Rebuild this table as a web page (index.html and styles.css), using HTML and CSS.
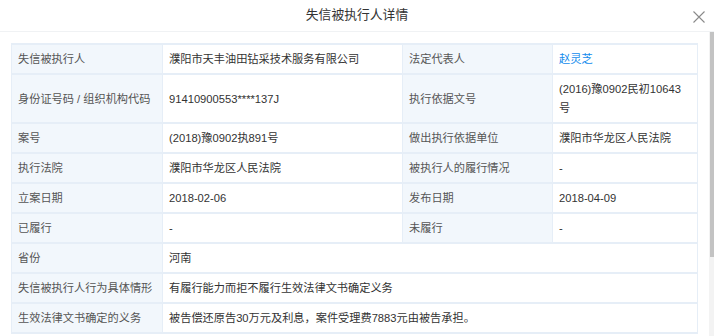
FILE: index.html
```html
<!DOCTYPE html>
<html lang="zh">
<head>
<meta charset="utf-8">
<title>失信被执行人详情</title>
<link rel="stylesheet" href="styles.css">
</head>
<body>
<div class="dialog">
  <div class="header">
    <h1 class="title">失信被执行人详情</h1>
    <button class="close" aria-label="关闭">
      <svg width="12" height="12" viewBox="0 0 12 12"><path d="M0.5 0.5L11.5 11.5M11.5 0.5L0.5 11.5" stroke="#8a8a8a" stroke-width="1.1" fill="none"/></svg>
    </button>
  </div>
  <div class="main">
    <div class="body">
      <table class="detail">
        <colgroup>
          <col class="c-label1"><col class="c-val1"><col class="c-label2"><col class="c-val2">
        </colgroup>
        <tr><td class="lbl">失信被执行人</td><td>濮阳市天丰油田钻采技术服务有限公司</td><td class="lbl">法定代表人</td><td><a class="link" href="#">赵灵芝</a></td></tr>
        <tr><td class="lbl">身份证号码 / 组织机构代码</td><td>91410900553****137J</td><td class="lbl">执行依据文号</td><td>(2016)豫0902民初10643号</td></tr>
        <tr><td class="lbl">案号</td><td>(2018)豫0902执891号</td><td class="lbl">做出执行依据单位</td><td>濮阳市华龙区人民法院</td></tr>
        <tr><td class="lbl">执行法院</td><td>濮阳市华龙区人民法院</td><td class="lbl">被执行人的履行情况</td><td>-</td></tr>
        <tr><td class="lbl">立案日期</td><td>2018-02-06</td><td class="lbl">发布日期</td><td>2018-04-09</td></tr>
        <tr><td class="lbl">已履行</td><td>-</td><td class="lbl">未履行</td><td>-</td></tr>
        <tr><td class="lbl">省份</td><td colspan="3">河南</td></tr>
        <tr><td class="lbl">失信被执行人行为具体情形</td><td colspan="3">有履行能力而拒不履行生效法律文书确定义务</td></tr>
        <tr><td class="lbl">生效法律文书确定的义务</td><td colspan="3">被告偿还原告30万元及利息，案件受理费7883元由被告承担。</td></tr>
      </table>
    </div>
    <div class="scrollbar"><div class="thumb"></div></div>
  </div>
</div>
</body>
</html>
```
FILE: styles.css
```css
* { box-sizing: border-box; }
html, body { margin: 0; padding: 0; background: #fff; }
body {
  font-family: "Liberation Sans", "Noto Sans CJK SC", sans-serif;
  font-size: 11.2px;
  color: #333;
  width: 714px;
  height: 336px;
  overflow: hidden;
}
.dialog { display: flex; flex-direction: column; height: 336px; }
.header {
  position: relative;
  height: 32px;
  flex: none;
  display: flex;
  align-items: center;
  justify-content: center;
  border-bottom: 1px solid #f0f2f4;
}
.title {
  margin: 0;
  font-size: 12.8px;
  font-weight: normal;
  color: #333;
  line-height: 18px;
  padding-bottom: 1px;
}
.close {
  position: absolute;
  right: 9px;
  top: 11px;
  border: 0;
  background: none;
  padding: 0;
  width: 12px;
  height: 12px;
  display: block;
}
.close svg { display: block; }
.main {
  flex: 1;
  display: flex;
  min-height: 0;
}
.body {
  flex: 1;
  overflow: hidden;
  padding: 11px 12px 0 11px;
}
.scrollbar {
  flex: none;
  width: 5px;
  background: #f3f3f3;
  display: flex;
  justify-content: flex-end;
}
.thumb {
  width: 4px;
  height: 225px;
  background: #c3c3c3;
}
.detail {
  width: 686px;
  border-collapse: collapse;
  table-layout: fixed;
  border: 1px solid #e6eef7;
}
.c-label1 { width: 151px; }
.c-val1 { width: 240px; }
.c-label2 { width: 150px; }
.c-val2 { width: 145px; }
.detail td {
  border: 1px solid #e6eef7;
  border-width: 2px 1px;
  padding: 5px 6px 4px 6px;
  line-height: 19px;
  vertical-align: middle;
  color: #333;
  word-break: break-all;
}
.detail td.lbl {
  background: #f2f7fc;
  color: #555;
}
.link { color: #128bed; text-decoration: none; }
```
